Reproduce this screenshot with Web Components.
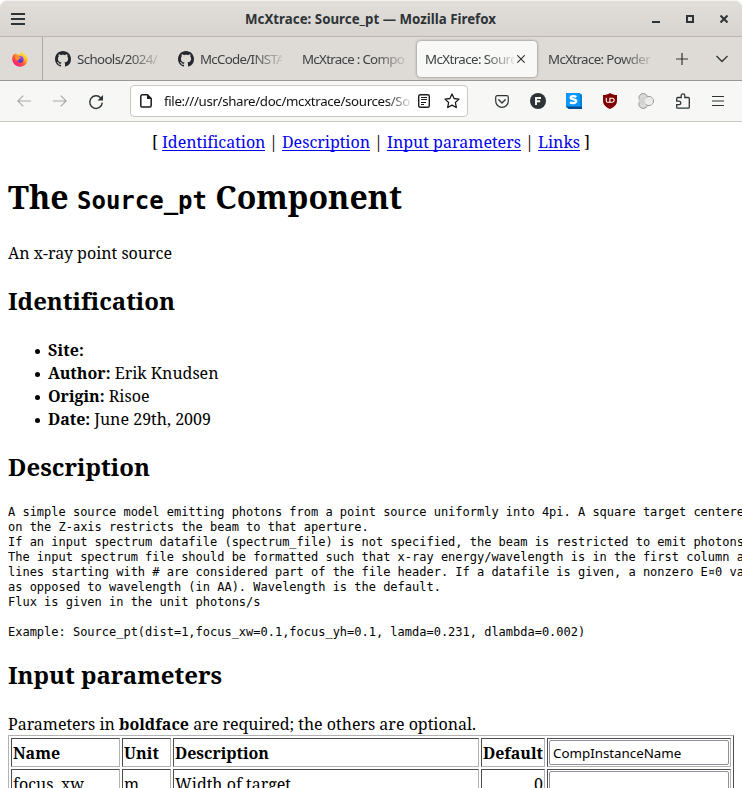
<!DOCTYPE html>
<html lang="en">
<head>
<meta charset="utf-8">
<title>McXtrace: Source_pt</title>
<style>
html,body{margin:0;height:100%;overflow:hidden;background:#fff}
</style>
</head>
<body>
<browser-window></browser-window>
<script>
const define = (name, html, setup) => customElements.define(name, class extends HTMLElement {
  connectedCallback() {
    if (this.shadowRoot) return;
    const root = this.attachShadow({mode: 'open'});
    const t = document.createElement('template');
    t.innerHTML = html;
    root.append(t.content.cloneNode(true));
    if (setup) setup.call(this, root);
  }
});

/* Text run spaced so that it takes up exactly `w` pixels. */
define('fit-text', `<style>:host{display:inline-block;white-space:pre}span{display:inline-block}</style><span><slot></slot></span>`, function (root) {
  const span = root.querySelector('span');
  const w = +this.getAttribute('w');
  const n = [...this.textContent].length;
  span.style.letterSpacing = (w - span.getBoundingClientRect().width) / n + 'px';
  this.style.width = w + 'px';
});

const icons = {
  burger: ['0 0 14 12', '<path d="M0 1h14M0 6h14M0 11h14" stroke="#2e3436" stroke-width="2"/>'],
  min: ['0 0 8 8', '<path d="M0 7h8" stroke="#2e3436" stroke-width="2"/>'],
  max: ['0 0 8 8', '<path d="M1 1h6v6H1z" fill="none" stroke="#2e3436" stroke-width="2"/>'],
  close: ['0 0 8 8', '<path d="M.5.5l7 7M7.500.5l-7 7" stroke="#2e3436" stroke-width="2"/>'],
  x: ['0 0 8 8', '<path d="M.3.3l7.400 7.400M7.700.3L.3 7.700" stroke="#2e3436" stroke-width="1.1"/>'],
  plus: ['0 0 12 12', '<path d="M6 0v12M0 6h12" stroke="#2e3436" stroke-width="1.2"/>'],
  chevron: ['0 0 12 8', '<path d="M.5 1L6 6.500 11.500 1" fill="none" stroke="#2e3436" stroke-width="1.3"/>'],
  back: ['0 0 14 12', '<path d="M14 6H1M6.300.6L.8 6l5.500 5.400" fill="none" stroke="#a9aaa9" stroke-width="1.2"/>'],
  forward: ['0 0 14 12', '<path d="M0 6h13M7.700.6L13.200 6l-5.500 5.400" fill="none" stroke="#a9aaa9" stroke-width="1.2"/>'],
  reload: ['0 0 16 16', '<path d="M12.800 4A6.300 6.300 0 1 0 14.300 8.600" fill="none" stroke="#2e3436" stroke-width="1.4"/><path d="M15 1v5.500H9.500z" fill="#2e3436"/>'],
  page: ['0 0 12 14', '<path d="M2.400.8h5l3.800 3.800v7a1.500 1.500 0 0 1-1.500 1.500H2.400A1.500 1.500 0 0 1 .8 11.600V2.300A1.500 1.500 0 0 1 2.400.8z" fill="none" stroke="#1b1c1c" stroke-width="1.5"/><path d="M7 .5V5h4.500z" fill="#1b1c1c"/>'],
  reader: ['0 0 12 14', '<rect x=".7" y=".7" width="10.600" height="12.600" rx="1.500" fill="none" stroke="#1b1c1c" stroke-width="1.4"/><path d="M3 3.500h6M3 5.500h6M3 8.500h5M3 10.500h3" stroke="#1b1c1c" stroke-width="1"/>'],
  star: ['0 0 16 16', '<path d="M8 1l2.100 4.500 4.900.6-3.600 3.400.9 5L8 12.100l-4.300 2.400.9-5L1 6.100l4.900-.6z" fill="none" stroke="#1b1c1c" stroke-width="1.3" stroke-linejoin="round"/>'],
  pocket: ['0 0 14 13', '<path d="M2.200.7h9.600a1.500 1.500 0 0 1 1.500 1.500V6a6.300 6.300 0 0 1-12.600 0V2.200A1.500 1.500 0 0 1 2.200.7z" fill="none" stroke="#2e3436" stroke-width="1.2"/><path d="M3.800 4.800L7 7.900l3.200-3.100" fill="none" stroke="#2e3436" stroke-width="1.4" stroke-linecap="round" stroke-linejoin="round"/>'],
  fcircle: ['0 0 16 16', '<circle cx="8" cy="8" r="8" fill="#2e3436"/><path d="M6 12V5h5M6 8.300h4.200" fill="none" stroke="#f7f7f5" stroke-width="1.900"/>'],
  scube: ['0 0 16 16', '<path d="M0 0h13l3 2v14H3l-3-2z" fill="#0057a8"/><path d="M13 0l3 2v12h-3z" fill="#0080d8"/><path d="M0 13h14l2 3H3z" fill="#004b8f"/><path d="M0 0h14v13.500H0z" fill="#0997fb"/><path d="M10.300 4C9 3 4.700 2.500 4.700 4.800c0 2.200 5.500 1 5.500 3.300S5.800 10.500 4 9.200" fill="none" stroke="#fff" stroke-width="2.300"/>'],
  shield: ['0 0 14 16', '<path d="M7 0c2.200 1.500 4.400 2 7 2v5.500c0 4-2.600 6.500-7 8.500-4.400-2-7-4.500-7-8.500V2c2.600 0 4.800-.5 7-2z" fill="#800000"/><path d="M3.300 4.800v3.300q0 1.100 1.100 1.100h2.500V4.800" fill="none" stroke="#fff" stroke-width="1.1"/><path d="M6.900 5.300h2.300a1.900 1.900 0 0 1 0 3.900H6.900" fill="none" stroke="#fff" stroke-width="1.1"/>'],
  cloud: ['0 0 16 16', '<g fill="#dcdcdb" stroke="#929392" stroke-width="1"><circle cx="5.300" cy="4.900" r="4.300"/><circle cx="5.300" cy="11" r="4.400"/><circle cx="11" cy="8" r="4.500"/></g><circle cx="5.300" cy="7.900" r="4.100" fill="#d2d3d2"/><circle cx="11" cy="8" r="4" fill="#ececeb"/>'],
  puzzle: ['0 0 14 16', '<path d="M.7 6.800V5.500Q.7 4.500 1.700 4.500H5.200V2.700a1.800 1.800 0 0 1 3.600 0V4.500h3.500q1 0 1 1v8.700q0 1-1 1H1.700q-1 0-1-1V11.700H3a1.700 1.700 0 0 0 0-3.500H.7z" fill="none" stroke="#2e3436" stroke-width="1.3"/>'],
  menu: ['0 0 12 10', '<path d="M0 .5h12M0 5h12M0 9.500h12" stroke="#2e3436" stroke-width="1.200"/>'],
  github: ['0 0 16 16', '<path fill="#24292f" d="M8 0C3.580 0 0 3.580 0 8c0 3.540 2.290 6.530 5.470 7.590.4.070.55-.17.55-.38 0-.19-.01-.82-.01-1.490-2.010.37-2.530-.49-2.690-.94-.09-.23-.48-.94-.82-1.130-.28-.15-.68-.52-.01-.53.63-.01 1.080.58 1.230.82.72 1.210 1.870.87 2.330.66.07-.52.28-.87.51-1.070-1.780-.2-3.640-.89-3.640-3.950 0-.87.31-1.590.82-2.150-.08-.2-.36-1.020.08-2.120 0 0 .67-.21 2.200.82.64-.18 1.320-.27 2-.27s1.360.09 2 .27c1.530-1.040 2.200-.82 2.200-.82.44 1.100.16 1.920.08 2.120.51.56.82 1.270.82 2.150 0 3.070-1.870 3.750-3.650 3.950.29.25.54.73.54 1.480 0 1.070-.01 1.930-.01 2.200 0 .21.15.46.55.38A8.010 8.010 0 0 0 16 8c0-4.420-3.580-8-8-8z"/>'],
  firefox: ['0 0 16 16', '<defs><linearGradient id="a" x1=".85" y1=".1" x2=".2" y2=".95"><stop offset="0" stop-color="#fff44f"/><stop offset=".35" stop-color="#ffb52c"/><stop offset=".6" stop-color="#ff5a36"/><stop offset="1" stop-color="#f5128c"/></linearGradient><linearGradient id="b" x1="0" y1="0" x2="0" y2="1"><stop offset="0" stop-color="#9059ff"/><stop offset="1" stop-color="#5b2bb8"/></linearGradient></defs><path d="M10 0c.4 1.700 1.500 2.300 2.500 3.500l.3-.6c2.200 1.600 3.100 4 2.900 6.200A7.800 7.800 0 0 1 .2 8.500C0 6.300.8 4.300 2.100 2.500l.4 1.300L4 1.700l.6 1.900c1.200-.3 2.600-.1 3.400.3C8.200 2.500 9 1 10 0z" fill="url(#a)"/><circle cx="8.200" cy="8.400" r="3.300" fill="url(#b)"/><path d="M3 5.300c1.400-.9 3.400-.7 4.400.4.200.5 1 .7 1.600.8-.4 1-1.700.9-2.300 1.600-.4.500-.3 1.200.2 1.700-2.400-.2-4-1.500-3.900-4.500z" fill="#ff9328"/>']
};
define('ui-icon', `<style>:host{display:block;flex:none;line-height:0}svg{display:block;width:100%;height:100%}</style>`, function (root) {
  const [box, body] = icons[this.getAttribute('name')];
  const size = box.split(' ');
  this.style.width = size[2] + 'px';
  this.style.height = size[3] + 'px';
  root.innerHTML += `<svg viewBox="${box}">${body}</svg>`;
});

define('title-bar', `<style>
:host{display:grid;grid-template-columns:1fr auto 1fr;align-items:center;box-sizing:border-box;height:37px;padding:0 14px 0 11px;
 background:linear-gradient(#e1deda,#d8d4d0);border-top:1px solid #f3f2f0;border-bottom:1px solid #bfb5ac;border-radius:7px 7px 0 0;font:bold 13.300px "Noto Sans",sans-serif;color:#2e3436}
.r{display:flex;justify-content:flex-end;gap:26px}
.t{margin-left:2px}
</style><ui-icon name="burger"></ui-icon><div class="t"><fit-text w="251">McXtrace: Source_pt — Mozilla Firefox</fit-text></div>
<div class="r"><ui-icon name="min"></ui-icon><ui-icon name="max"></ui-icon><ui-icon name="close"></ui-icon></div>`);

define('browser-tab', `<style>
:host{display:flex;align-items:center;box-sizing:border-box;height:36px;padding:0 11px 0 8px;border-radius:4px;width:123px;gap:6px;flex:none;font:13.300px/18px "Noto Sans",sans-serif;color:#3c4143}
:host([active]){background:#f8f8f6;box-shadow:0 0 3px #0007;padding-right:12px;gap:3px;width:120px;margin:0 2px 0 1px}
.l{flex:1;min-width:0;overflow:hidden;white-space:nowrap;-webkit-mask:linear-gradient(to right,#000 calc(100% - 30px),#0002);mask:linear-gradient(to right,#000 calc(100% - 30px),#0002)}
</style><slot name="icon"></slot><div class="l"><slot></slot></div><slot name="close"></slot>`);

define('tab-strip', `<style>
:host{display:flex;align-items:center;height:43px;background:#dedad6;border-bottom:1px solid #9a9793}
.pin{width:42px;height:43px;border-right:1px solid #aaa6a3;display:flex;align-items:center;justify-content:center;box-sizing:content-box;flex:none}
.pin ui-icon{margin-left:-2px}
.tabs{display:flex;padding-left:4px;flex:none}
.end{display:flex;align-items:center;gap:28px;margin-left:14px}
</style><div class="pin"><ui-icon name="firefox"></ui-icon></div><div class="tabs">
<browser-tab><ui-icon slot="icon" name="github"></ui-icon><fit-text w="80">Schools/2024/</fit-text></browser-tab>
<browser-tab><ui-icon slot="icon" name="github"></ui-icon><fit-text w="84">McCode/INSTA</fit-text></browser-tab>
<browser-tab style="padding-left:9px"><fit-text w="102">McXtrace : Compo</fit-text></browser-tab>
<browser-tab active><fit-text w="91">McXtrace: Sourc</fit-text><ui-icon slot="close" name="x"></ui-icon></browser-tab>
<browser-tab style="padding:0 10px 0 9px"><fit-text w="102">McXtrace: Powder</fit-text></browser-tab>
</div><div class="end"><ui-icon name="plus"></ui-icon><ui-icon name="chevron"></ui-icon></div>`);

define('nav-bar', `<style>
:host{display:flex;align-items:center;box-sizing:border-box;height:41px;background:#f7f7f5;border-bottom:1px solid #cbcac2;padding:0 18px 0 17px}
.nav{display:flex;align-items:center;gap:22px;width:113px;flex:none}
.nav ui-icon:last-child{margin-left:-1px;margin-top:1px}
.url{display:flex;align-items:center;box-sizing:border-box;width:338px;height:32px;border:1px solid #cdc7c2;border-radius:4px;background:#fff;padding:0 7px 0 9px;font:13.300px/20px "Noto Sans",sans-serif;color:#101010}
.u{width:246px;margin:0 8px 0 12px;overflow:hidden;white-space:nowrap;flex:none;-webkit-mask:linear-gradient(to right,#000 222px,#0002);mask:linear-gradient(to right,#000 222px,#0002)}
.star{margin-left:14px}
.ext{display:flex;align-items:center;gap:21px;flex:1;margin-left:27px}
.ext [name=scube]{margin-left:-1px}
.ext [name=puzzle],.ext [name=menu]{margin-left:1px}
</style><div class="nav"><ui-icon name="back"></ui-icon><ui-icon name="forward"></ui-icon><ui-icon name="reload"></ui-icon></div>
<div class="url"><ui-icon name="page"></ui-icon><div class="u"><fit-text w="246">file:///usr/share/doc/mcxtrace/sources/So</fit-text></div><ui-icon name="reader"></ui-icon><ui-icon class="star" name="star"></ui-icon></div>
<div class="ext"><ui-icon name="pocket"></ui-icon><ui-icon name="fcircle"></ui-icon><ui-icon name="scube"></ui-icon><ui-icon name="shield"></ui-icon><ui-icon name="cloud"></ui-icon><ui-icon name="puzzle"></ui-icon><ui-icon name="menu"></ui-icon></div>`);

define('param-table', `<style>
:host{display:grid;grid-template-columns:109px 49px 306px 64px 184px;grid-auto-rows:29px;gap:2px;padding:2px;border:1px solid;border-color:#b2b2b2 #4c4c4c #4c4c4c #b2b2b2;width:720px}
div{box-sizing:border-box;border:1px solid;border-color:#4c4c4c #b2b2b2 #b2b2b2 #4c4c4c;padding:3px 1px 0;white-space:nowrap;line-height:23px}
.n{text-align:right}
.i{padding:1px}
input{box-sizing:border-box;display:block;width:180px;height:25px;border:1px solid #8f8f9d;border-radius:2px;padding:2px 3px 1px;font:13.333px "Noto Sans",sans-serif;color:#000;background:#fff}
b{font-weight:bold}
</style>
<div><b><fit-text w="47">Name</fit-text></b></div><div><b><fit-text w="35">Unit</fit-text></b></div><div><b><fit-text w="94">Description</fit-text></b></div><div><b><fit-text w="60">Default</fit-text></b></div><div class="i"><input value="CompInstanceName"></div>
<div><fit-text w="71">focus_xw</fit-text></div><div><fit-text w="15">m</fit-text></div><div><fit-text w="116">Width of target</fit-text></div><div class="n"><fit-text w="9">0</fit-text></div><div class="i"><input></div>`);

define('doc-page', `<style>
:host{display:block;padding:9px 8px 0;font:16px/23px "Noto Serif","DejaVu Serif Condensed","DejaVu Serif",serif;color:#000;background:#fff;overflow:hidden}
nav{text-align:center;white-space:pre}
a{color:#0000ee;text-decoration:none}
a fit-text{border-bottom:1px solid #00e;line-height:15px}
h1{font-size:32px;line-height:44px;margin:21.400px 0 22.600px;white-space:pre}
h2{font-size:24px;line-height:33px;margin:19px 0}
code{font:bold 24px/30px "DejaVu Sans Mono",monospace}
p{margin:0}
ul{margin:22px 0 19px;padding-left:40px;list-style:none}
li::before{content:"";display:inline-block;width:5px;height:5px;border-radius:50%;background:#000;margin:0 8px 2px -13px}
pre{font:12px/15px "DejaVu Sans Mono",monospace;letter-spacing:-.010px;margin:22px 0 -1px}
.x{margin:22px 0 -1px}
</style>
<nav><fit-text w="10">[ </fit-text><a><fit-text w="103">Identification</fit-text></a><fit-text w="17"> | </fit-text><a><fit-text w="88">Description</fit-text></a><fit-text w="17"> | </fit-text><a><fit-text w="134">Input parameters</fit-text></a><fit-text w="17"> | </fit-text><a><fit-text w="42">Links</fit-text></a><fit-text w="10"> ]</fit-text></nav>
<h1><fit-text w="69">The </fit-text><code><fit-text w="130">Source_pt</fit-text></code><fit-text w="195"> Component</fit-text></h1>
<p><fit-text w="164">An x-ray point source</fit-text></p>
<h2><fit-text w="166">Identification</fit-text></h2>
<ul><li><b><fit-text w="36">Site:</fit-text></b></li>
<li><b><fit-text w="62.500">Author:</fit-text></b><fit-text w="108"> Erik Knudsen</fit-text></li>
<li><b><fit-text w="56.500">Origin:</fit-text></b><fit-text w="45"> Risoe</fit-text></li>
<li><b><fit-text w="42">Date:</fit-text></b><fit-text w="121"> June 29th, 2009</fit-text></li></ul>
<h2><fit-text w="142">Description</fit-text></h2>
<pre>A simple source model emitting photons from a point source uniformly into 4pi. A square target centered
on the Z-axis restricts the beam to that aperture.
If an input spectrum datafile (spectrum_file) is not specified, the beam is restricted to emit photons
The input spectrum file should be formatted such that x-ray energy/wavelength is in the first column and
lines starting with # are considered part of the file header. If a datafile is given, a nonzero E¤0 value
as opposed to wavelength (in AA). Wavelength is the default.
Flux is given in the unit photons/s

Example: Source_pt(dist=1,focus_xw=0.1,focus_yh=0.1, lamda=0.231, dlambda=0.002)</pre>
<h2><fit-text w="214">Input parameters</fit-text></h2>
<div class="x"><fit-text w="111">Parameters in </fit-text><b><fit-text w="70">boldface</fit-text></b><fit-text w="287"> are required; the others are optional.</fit-text></div>
<param-table></param-table>`);

define('browser-window', `<style>:host{display:flex;flex-direction:column;width:742px;height:788px;overflow:hidden}title-bar,tab-strip,nav-bar{flex:none}doc-page{flex:1;min-height:0}</style>
<title-bar></title-bar><tab-strip></tab-strip><nav-bar></nav-bar><doc-page></doc-page>`);
</script>
</body>
</html>
